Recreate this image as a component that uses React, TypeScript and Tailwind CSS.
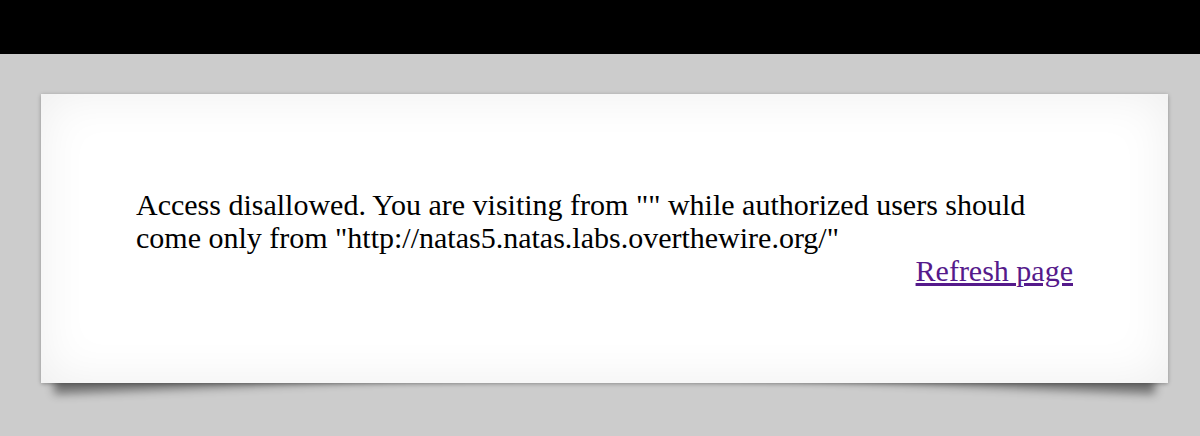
export default function App() {
  return (
    <div className="min-h-[436px] w-[1200px] bg-[#cccccc] font-['Liberation_Serif',serif] text-black">
      <div className="h-[54px] bg-black" />
      <div className="px-[41px] pt-[40px]">
        <div className="relative w-[1127px]">
          {/* lifted corner shadows */}
          <div className="absolute left-[12px] bottom-[14px] h-[20px] w-[45%] -rotate-[2.5deg] shadow-[0_14px_10px_rgba(0,0,0,0.45)]" />
          <div className="absolute right-[12px] bottom-[14px] h-[20px] w-[45%] rotate-[2.5deg] shadow-[0_14px_10px_rgba(0,0,0,0.45)]" />
          <div className="relative bg-white px-[95px] pt-[94px] pb-[96px] shadow-[inset_0_0_50px_rgba(0,0,0,0.07),0_1px_4px_rgba(0,0,0,0.3)]">
            <div className="text-[30px] leading-[33px] pr-[30px]">
              Access disallowed. You are visiting from "" while authorized users should come only from "http://natas5.natas.labs.overthewire.org/"
            </div>
            <div className="text-right text-[30px] leading-[33px]">
              <a href="#" className="text-[#551a8b] underline">Refresh page</a>
            </div>
          </div>
        </div>
      </div>
    </div>
  );
}
